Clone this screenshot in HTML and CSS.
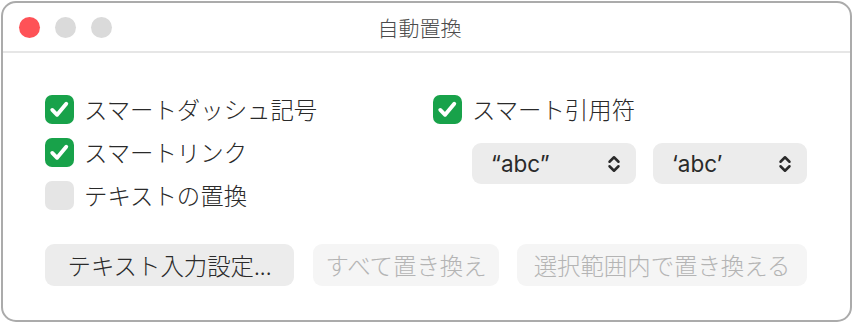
FILE: index.html
```html
<!DOCTYPE html>
<html lang="ja">
<head>
<meta charset="utf-8">
<title>自動置換</title>
<link rel="stylesheet" href="styles.css">
</head>
<body>
<div class="window">
  <div class="titlebar">
    <div class="lights">
      <span class="light red"></span>
      <span class="light"></span>
      <span class="light"></span>
    </div>
    <div class="title">自動置換</div>
    <div></div>
  </div>
  <div class="content">
    <div class="options">
      <div class="col-left">
        <label class="check"><span class="box on"><svg viewBox="0 0 30 30"><path d="M7.5 15.5 L12.5 20.5 L22 9"/></svg></span><span class="label">スマートダッシュ記号</span></label>
        <label class="check"><span class="box on"><svg viewBox="0 0 30 30"><path d="M7.5 15.5 L12.5 20.5 L22 9"/></svg></span><span class="label">スマートリンク</span></label>
        <label class="check"><span class="box"></span><span class="label">テキストの置換</span></label>
      </div>
      <div class="col-right">
        <label class="check"><span class="box on"><svg viewBox="0 0 30 30"><path d="M7.5 15.5 L12.5 20.5 L22 9"/></svg></span><span class="label">スマート引用符</span></label>
        <div class="popups">
          <div class="popup wide"><span class="ptext">“abc”</span><svg class="chev" viewBox="0 0 12 16"><path d="M2 6 L6 2 L10 6 M2 10 L6 14 L10 10"/></svg></div>
          <div class="popup narrow"><span class="ptext">‘abc’</span><svg class="chev" viewBox="0 0 12 16"><path d="M2 6 L6 2 L10 6 M2 10 L6 14 L10 10"/></svg></div>
        </div>
      </div>
    </div>
    <div class="buttons">
      <div class="btn b1">テキスト入力設定...</div>
      <div class="btn disabled b2">すべて置き換え</div>
      <div class="btn disabled b3">選択範囲内で置き換える</div>
    </div>
  </div>
</div>
</body>
</html>
```
FILE: styles.css
```css
html, body {
  margin: 0;
  padding: 0;
  background: #ffffff;
}
body {
  font-family: "Noto Sans CJK JP", "Inter", sans-serif;
  color: #2a2a2a;
}
.window {
  box-sizing: border-box;
  margin: 1px 0 0 1px;
  width: 851px;
  height: 321px;
  border: 2px solid #ababab;
  border-radius: 15px;
  background: #ffffff;
  overflow: hidden;
}
.titlebar {
  box-sizing: border-box;
  height: 50px;
  border-bottom: 2px solid #e6e6e6;
  display: grid;
  grid-template-columns: 1fr auto 1fr;
  align-items: center;
  padding-right: 14px;
}
.lights {
  display: flex;
  gap: 15px;
  padding-left: 16px;
}
.light {
  width: 21px;
  height: 21px;
  border-radius: 50%;
  background: #dadada;
}
.light.red {
  background: #fe5257;
}
.title {
  font-size: 21px;
  font-weight: 300;
  color: #4b4b4b;
  line-height: 1;
}
.content {
  padding: 42px 0 0 42px;
}
.options {
  display: flex;
}
.col-left {
  width: 388px;
  display: flex;
  flex-direction: column;
  gap: 14px;
}
.col-right {
  display: flex;
  flex-direction: column;
}
.check {
  display: flex;
  align-items: center;
  height: 29px;
  gap: 10px;
}
.box {
  width: 29px;
  height: 29px;
  border-radius: 7px;
  background: #e5e5e5;
  display: flex;
  align-items: center;
  justify-content: center;
}
.box.on {
  background: #18a24a;
}
.box svg {
  width: 29px;
  height: 29px;
}
.box svg path {
  fill: none;
  stroke: #ffffff;
  stroke-width: 4;
  stroke-linecap: round;
  stroke-linejoin: round;
}
.label {
  font-size: 23.4px;
  font-weight: 300;
  line-height: 1;
  color: #2a2a2a;
}
.popups {
  display: flex;
  gap: 17px;
  margin-top: 19px;
  margin-left: 39px;
}
.popup {
  box-sizing: border-box;
  height: 41px;
  border-radius: 9px;
  background: #ececec;
  display: flex;
  align-items: center;
  justify-content: space-between;
  padding: 0 15px 0 19px;
}
.popup.wide { width: 164px; }
.popup.narrow { width: 154px; }
.ptext {
  font-family: "Inter", "Liberation Sans", sans-serif;
  font-size: 22.5px;
  color: #2a2a2a;
}
.chev {
  width: 14px;
  height: 18px;
}
.chev path {
  fill: none;
  stroke: #2a2a2a;
  stroke-width: 2.2;
  stroke-linecap: round;
  stroke-linejoin: round;
}
.buttons {
  display: flex;
  gap: 18px;
  margin-top: 34px;
}
.btn {
  box-sizing: border-box;
  height: 42px;
  border-radius: 9px;
  background: #ececec;
  display: flex;
  align-items: center;
  justify-content: center;
  font-size: 23.4px;
  font-weight: 300;
  color: #2a2a2a;
}
.btn.disabled {
  background: #f5f5f5;
  color: #b4b4b4;
}
.b1 { width: 249px; margin-right: 1px; }
.b2 { width: 186px; }
.b3 { width: 290px; }
```
